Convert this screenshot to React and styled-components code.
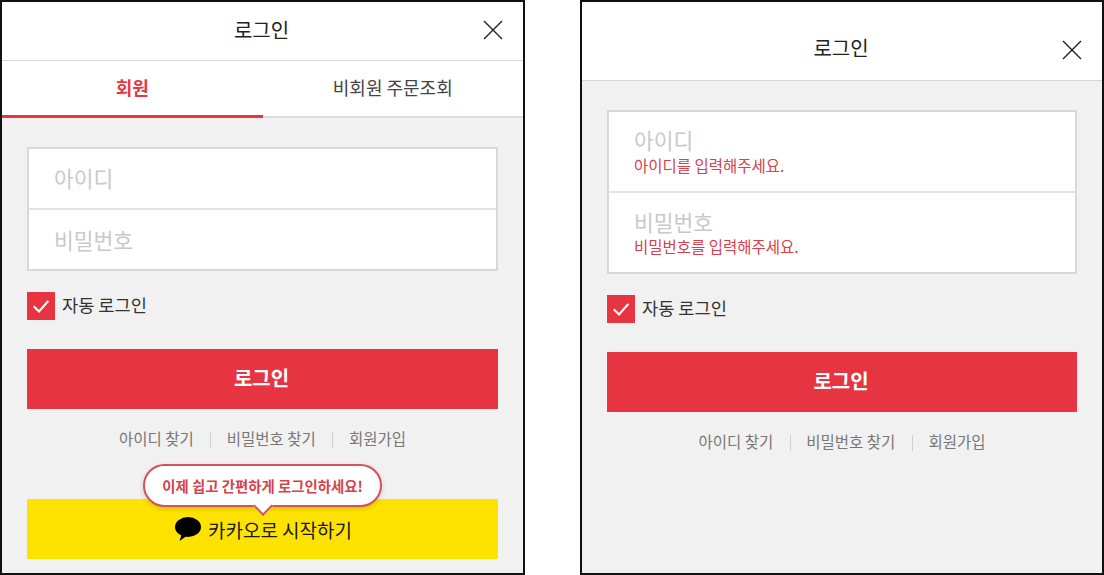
import React from "react";
import styled, { createGlobalStyle } from "styled-components";

const Global = createGlobalStyle`
  html, body {
    margin: 0;
    padding: 0;
    background: #fff;
    overflow: hidden;
  }
  * { box-sizing: border-box; }
  body {
    font-family: "Noto Sans CJK KR", "Noto Sans", sans-serif;
  }
`;

const Page = styled.div`
  width: 1104px;
  height: 575px;
  display: flex;
  justify-content: space-between;
`;
const Panel = styled.div`
  width: ${p => p.w}px;
  height: 575px;
  border: 2px solid #111;
  background: #f1f1f1;
  display: flex;
  flex-direction: column;
`;
const Header = styled.div`
  height: ${p => p.h}px;
  padding: ${p => p.top}px 2px 0 0;
  background: #fff;
  border-bottom: 1px solid #d6d6d6;
  display: flex;
  justify-content: center;
  position: relative;
`;
const Title = styled.div`
  font-size: 20px;
  line-height: 28px;
  color: #222;
`;
const Close = styled.button`
  position: absolute;
  right: 20px;
  top: ${p => p.top}px;
  width: 20px;
  height: 20px;
  padding: 0;
  border: 0;
  background: none;
  display: block;
`;
const Tabs = styled.div`
  height: 57px;
  background: #fff;
  display: flex;
  border-bottom: 2px solid #dcdcdc;
`;
const Tab = styled.div`
  flex: 1;
  height: 57px;
  padding-top: 12px;
  text-align: center;
  font-size: 18px;
  line-height: 28px;
  color: ${p => (p.active ? "#e03a45" : "#444")};
  font-weight: ${p => (p.active ? 700 : 400)};
  border-bottom: 3px solid ${p => (p.active ? "#e63540" : "transparent")};
`;
const Body = styled.div`
  flex: 1;
  padding: ${p => p.top}px 25px 0;
  display: flex;
  flex-direction: column;
`;
const FieldBox = styled.div`
  border: 2px solid #d8d8d8;
  background: #fff;
`;
const Field = styled.div`
  height: ${p => p.h}px;
  padding: ${p => p.pad}px 25px 0;
  & + & {
    border-top: 2px solid #e4e4e4;
  }
`;
const Placeholder = styled.div`
  font-size: 21.5px;
  line-height: 28px;
  color: #c9c9c9;
`;
const ErrorText = styled.div`
  margin-top: ${p => p.gap}px;
  font-size: 15.5px;
  line-height: 20px;
  color: #d8404c;
`;
const CheckRow = styled.div`
  margin-top: 21px;
  height: 28px;
  display: flex;
  align-items: center;
  gap: 7px;
`;
const CheckBox = styled.div`
  width: 28px;
  height: 28px;
  background: #e63540;
  display: flex;
  align-items: center;
  justify-content: center;
`;
const CheckLabel = styled.div`
  font-size: 17.6px;
  line-height: 28px;
  padding-bottom: 2px;
  color: #333;
`;
const LoginButton = styled.button`
  margin-top: 29px;
  height: 60px;
  border: 0;
  padding: 0 2px 3px 0;
  background: #e63540;
  color: #fff;
  font-family: inherit;
  font-size: 20px;
  font-weight: 700;
`;
const Links = styled.div`
  margin-top: 18px;
  height: 22px;
  display: flex;
  justify-content: center;
  align-items: center;
`;
const LinkItem = styled.div`
  font-size: 15.5px;
  line-height: 22px;
  color: #777;
  & + &::before {
    content: "";
    display: inline-block;
    width: 1px;
    height: 16px;
    margin: 0 15.5px 0 16.5px;
    background: #d0d0d0;
    vertical-align: -3px;
  }
`;
const KakaoWrap = styled.div`
  margin-top: 50px;
  position: relative;
`;
const KakaoButton = styled.button`
  width: 100%;
  height: 60px;
  border: 0;
  padding: 0 0 0 2px;
  background: #ffe300;
  color: #1a1a1a;
  font-family: inherit;
  font-size: 19px;
  display: flex;
  align-items: center;
  justify-content: center;
  gap: 7px;
`;
const Bubble = styled.div`
  position: absolute;
  left: 116px;
  top: -35px;
  width: 239px;
  height: 43px;
  background: #fff;
  border: 2px solid #d8505a;
  border-radius: 22px;
  box-shadow: 0 2px 5px rgba(0, 0, 0, 0.15);
  display: flex;
  align-items: center;
  justify-content: center;
  font-size: 14.4px;
  font-weight: 700;
  color: #d8404c;
  &::after {
    content: "";
    position: absolute;
    left: 111px;
    bottom: -8px;
    width: 12px;
    height: 12px;
    background: #fff;
    border-right: 2px solid #d8505a;
    border-bottom: 2px solid #d8505a;
    transform: rotate(45deg);
  }
`;

const CloseIcon = () => (
  <svg width="20" height="20" viewBox="0 0 20 20">
    <path d="M1 1L19 19M19 1L1 19" stroke="#222" strokeWidth="1.4" fill="none" />
  </svg>
);
const CheckIcon = () => (
  <svg width="16" height="13" viewBox="0 0 16 13">
    <path d="M0.7 6.2L6 11.5L15.3 1" stroke="#fff" strokeWidth="2" fill="none" />
  </svg>
);
const KakaoIcon = () => (
  <svg width="26" height="24" viewBox="0 0 26 24">
    <ellipse cx="13" cy="10" rx="13" ry="10" fill="#000" />
    <path d="M7 16L4.500 24L13 18z" fill="#000" />
  </svg>
);

const LinkRow = () => (
  <Links>
    <LinkItem>아이디 찾기</LinkItem>
    <LinkItem>비밀번호 찾기</LinkItem>
    <LinkItem>회원가입</LinkItem>
  </Links>
);

export default function App() {
  return (
    <Page>
      <Global />
      <Panel w={525}>
        <Header h={59} top={14}>
          <Title>로그인</Title>
          <Close top={18}><CloseIcon /></Close>
        </Header>
        <Tabs>
          <Tab active>회원</Tab>
          <Tab>비회원 주문조회</Tab>
        </Tabs>
        <Body top={29}>
          <FieldBox>
            <Field h={59} pad={15}><Placeholder>아이디</Placeholder></Field>
            <Field h={61} pad={16}><Placeholder>비밀번호</Placeholder></Field>
          </FieldBox>
          <CheckRow>
            <CheckBox><CheckIcon /></CheckBox>
            <CheckLabel>자동 로그인</CheckLabel>
          </CheckRow>
          <LoginButton>로그인</LoginButton>
          <LinkRow />
          <KakaoWrap>
            <KakaoButton><KakaoIcon />카카오로 시작하기</KakaoButton>
            <Bubble>이제 쉽고 간편하게 로그인하세요!</Bubble>
          </KakaoWrap>
        </Body>
      </Panel>
      <Panel w={524}>
        <Header h={79} top={32}>
          <Title>로그인</Title>
          <Close top={38}><CloseIcon /></Close>
        </Header>
        <Body top={29}>
          <FieldBox>
            <Field h={79} pad={14}>
              <Placeholder>아이디</Placeholder>
              <ErrorText gap={1}>아이디를 입력해주세요.</ErrorText>
            </Field>
            <Field h={81} pad={15}>
              <Placeholder>비밀번호</Placeholder>
              <ErrorText gap={0}>비밀번호를 입력해주세요.</ErrorText>
            </Field>
          </FieldBox>
          <CheckRow>
            <CheckBox><CheckIcon /></CheckBox>
            <CheckLabel>자동 로그인</CheckLabel>
          </CheckRow>
          <LoginButton>로그인</LoginButton>
          <LinkRow />
        </Body>
      </Panel>
    </Page>
  );
}
